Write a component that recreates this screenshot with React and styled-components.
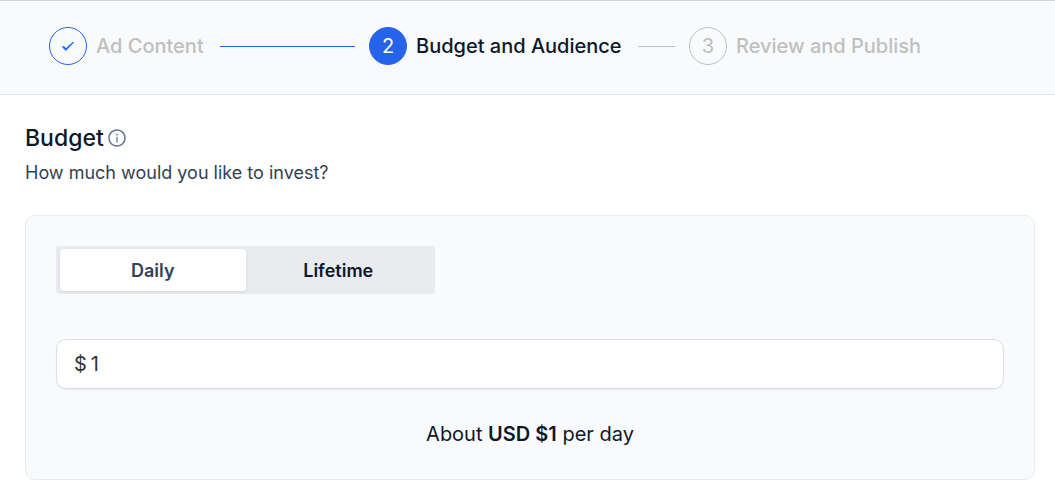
import { useState } from 'react'
import styled, { createGlobalStyle } from 'styled-components'
import { AiOutlineInfoCircle } from 'react-icons/ai'

const steps = [
  { title: 'Ad Content', status: 'finish' },
  { title: 'Budget and Audience', status: 'process' },
  { title: 'Review and Publish', status: 'wait' },
]

const periods = [
  { value: 'daily', label: 'Daily', unit: 'day' },
  { value: 'lifetime', label: 'Lifetime', unit: 'lifetime' },
]

const CheckIcon = () => (
  <svg width="14" height="14" viewBox="0 0 14 14" aria-hidden="true">
    <path
      d="M1 7.200h1.900c.3 0 .5.1.7.4L4.800 9.200 11.400 3.300c.2-.2.4-.3.700-.3h.700c.3 0 .3.200.1.400L5.200 11.600c-.3.300-.7.300-.9 0L.900 7.700c-.2-.2-.1-.5.1-.5z"
      fill="currentColor"
    />
  </svg>
)

const App = () => {
  const [period, setPeriod] = useState('daily')
  const [budget, setBudget] = useState('1')

  const { unit } = periods.find((p) => p.value === period)

  return (
    <>
      <GlobalStyle />
      <Header>
        <Steps>
          {steps.map((step, index) => (
            <Step
              key={step.title}
              aria-current={step.status === 'process' ? 'step' : undefined}
            >
              <StepIcon $status={step.status}>
                {step.status === 'finish' ? <CheckIcon /> : index + 1}
              </StepIcon>
              <StepTitle $active={step.status === 'process'}>
                {step.title}
              </StepTitle>
              {index < steps.length - 1 && (
                <StepLine $done={step.status === 'finish'} />
              )}
            </Step>
          ))}
        </Steps>
      </Header>

      <Main>
        <Heading>
          Budget
          <AiOutlineInfoCircle size={20} color="#64748b" />
        </Heading>
        <Subtitle htmlFor="budget">How much would you like to invest?</Subtitle>

        <Card>
          <Segmented>
            {periods.map(({ value, label }) => (
              <Segment
                key={value}
                type="button"
                aria-pressed={period === value}
                $selected={period === value}
                onClick={() => setPeriod(value)}
              >
                {label}
              </Segment>
            ))}
          </Segmented>

          <Field>
            <Currency>$</Currency>
            <Input
              id="budget"
              inputMode="numeric"
              value={budget}
              onChange={(e) => setBudget(e.target.value)}
            />
          </Field>

          <Summary>
            About <strong>USD ${budget}</strong> per {unit}
          </Summary>
        </Card>
      </Main>
    </>
  )
}

const GlobalStyle = createGlobalStyle`
  *,
  *::before,
  *::after {
    box-sizing: border-box;
  }

  body {
    margin: 0;
    background: #fff;
    color: #0f172a;
    font-family: 'Inter', sans-serif;
  }

  button,
  input {
    font-family: inherit;
  }
`

const stepColors = {
  finish: { border: '#2563eb', background: 'transparent', text: '#1668ff' },
  process: { border: '#2563eb', background: '#2563eb', text: '#fff' },
  wait: { border: '#bfbfbf', background: 'transparent', text: '#bfbfbf' },
}

const Header = styled.header`
  padding: 26px 46px 29px 49px;
  background: #f9fafc;
  border-top: 1px solid #d0d5dd;
  border-bottom: 1px solid #e5e7eb;
`

const Steps = styled.ol`
  display: flex;
  margin: 0;
  padding: 0;
  list-style: none;
`

const Step = styled.li`
  display: flex;
  flex: 1 1 0;
  align-items: center;
`

const StepIcon = styled.span`
  display: flex;
  flex: none;
  justify-content: center;
  align-items: center;
  width: 38px;
  height: 38px;
  margin-right: 9px;
  border: 1px solid ${(props) => stepColors[props.$status].border};
  border-radius: 50%;
  background: ${(props) => stepColors[props.$status].background};
  color: ${(props) => stepColors[props.$status].text};
  font-size: 20px;
`

const StepTitle = styled.span`
  color: ${(props) => (props.$active ? '#0f172a' : '#bfbfbf')};
  font-size: 20px;
  font-weight: 500;
  line-height: 38px;
  white-space: nowrap;
`

const StepLine = styled.span`
  flex: 1;
  height: 1px;
  margin: 0 14px 0 16px;
  background: ${(props) => (props.$done ? '#2563eb' : '#bfbfbf')};
`

const Main = styled.main`
  padding: 27px 20px 16px 25px;
`

const Heading = styled.h1`
  display: flex;
  align-items: center;
  gap: 3px;
  margin: 0;
  font-size: 23px;
  font-weight: 500;
  line-height: 32px;
`

const Subtitle = styled.label`
  display: block;
  margin-top: 6px;
  color: #334155;
  font-size: 18px;
  font-weight: 400;
  line-height: 26px;
`

const Card = styled.section`
  margin-top: 29px;
  padding: 30px;
  border: 1px solid #e9ebee;
  border-radius: 10px;
  background: #f9fafc;
`

const Segmented = styled.div`
  display: flex;
  max-width: 379px;
  height: 48px;
  padding: 3px 4px;
  border-radius: 3px;
  background: #eaebef;
`

const Segment = styled.button`
  flex: 1;
  border: 0;
  border-radius: 4px;
  background: ${(props) => (props.$selected ? '#fff' : 'transparent')};
  box-shadow: ${(props) =>
    props.$selected ? '0 1px 3px rgba(15, 23, 42, 0.1)' : 'none'};
  color: ${(props) => (props.$selected ? '#334155' : '#0f172a')};
  font-size: 18px;
  font-weight: 600;
  cursor: pointer;
`

const Field = styled.div`
  display: flex;
  align-items: center;
  gap: 4px;
  height: 50px;
  margin-top: 45px;
  padding: 0 17px;
  border: 1px solid #dcdfe6;
  border-radius: 10px;
  background: #fff;
  box-shadow: 0 1px 2px rgba(15, 23, 42, 0.06);
  color: #333;
  font-size: 20px;
`

const Currency = styled.span`
  flex: none;
`

const Input = styled.input`
  flex: 1;
  min-width: 0;
  padding: 0;
  border: 0;
  outline: 0;
  background: transparent;
  color: inherit;
  font-size: 20px;
`

const Summary = styled.p`
  margin: 30px 0 0;
  font-size: 20px;
  line-height: 30px;
  text-align: center;

  strong {
    font-weight: 600;
  }
`

export default App
